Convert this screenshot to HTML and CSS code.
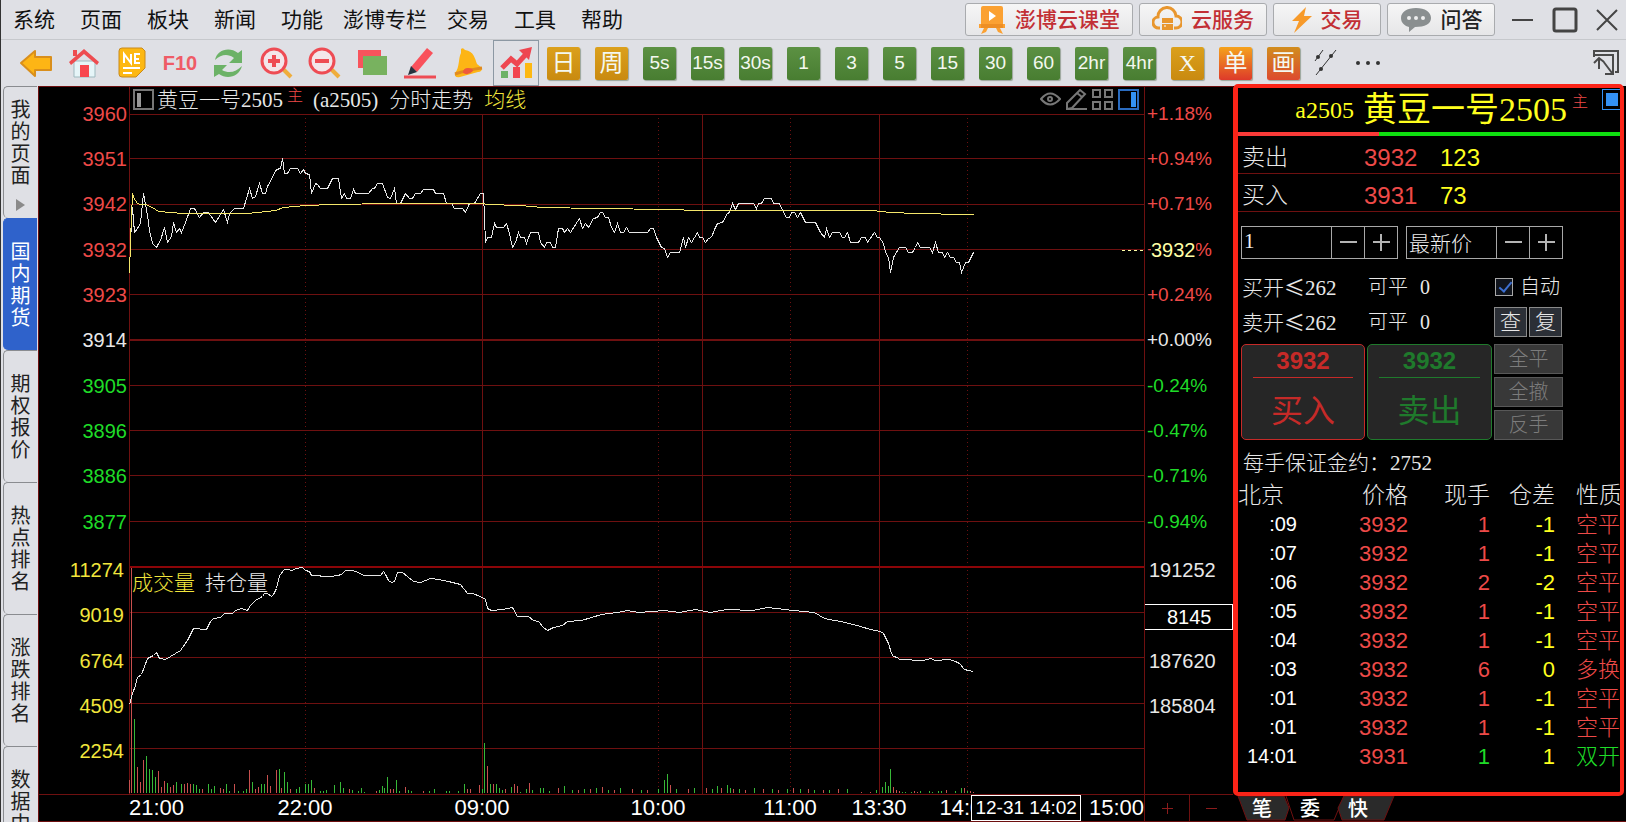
FILE: index.html
```
<!DOCTYPE html>
<html lang="zh-CN">

<head>
    <meta charset="UTF-8">
    <meta name="viewport" content="width=device-width, initial-scale=1.0">
    <title>分时走势</title>
    <link rel="stylesheet" href="styles.css">
</head>

<body>
    <!-- 菜单栏 -->
    <header class="menubar">
        <nav class="menu">
            <a href="#">系统</a>
            <a href="#">页面</a>
            <a href="#">板块</a>
            <a href="#">新闻</a>
            <a href="#">功能</a>
            <a href="#" class="long">澎博专栏</a>
            <a href="#">交易</a>
            <a href="#">工具</a>
            <a href="#">帮助</a>
        </nav>
        <div class="services">
            <button class="service w-course">
                <svg width="28" height="28" viewBox="0 0 28 28"><path d="M3 2q0-2 2-2h18q2 0 2 2v16h2v4h-5l3 6-5-2-2-4h-8l-2 4-5 2 3-6H1v-4h2z" fill="#fba132"/><path d="M3 18h22v4H3z" fill="#ee8f24"/><path d="M11 5l7 5-7 5z" fill="#fff"/></svg>
                澎博云课堂
            </button>
            <button class="service w-cloud">
                <svg width="30" height="28" viewBox="0 0 30 28" fill="none" stroke="#e8962e" stroke-width="3"><path d="M8 22H7a5 5 0 0 1-1-11 9 9 0 0 1 18-1 6 6 0 0 1 0 12h-2"/><path d="M10 12h11v5H10zM10 18h11v6H10z" fill="#e8962e" stroke="none"/><path d="M12 20h2" stroke="#fff" stroke-width="1"/></svg>
                云服务
            </button>
            <button class="service w-trade">
                <svg width="20" height="26" viewBox="0 0 20 26"><path d="M14 0L0 14h7L2 26 20 9h-8z" fill="#f79a2a"/></svg>
                交易
            </button>
            <button class="service w-ask dark">
                <svg width="32" height="26" viewBox="0 0 32 26"><path d="M16 1C7 1 1 5 1 11c0 5 4 8 8 9v5l6-5c10 0 16-3 16-9S25 1 16 1z" fill="#8a8f90"/><g fill="#eee"><circle cx="9" cy="11" r="2"/><circle cx="16" cy="11" r="2"/><circle cx="23" cy="11" r="2"/></g></svg>
                问答
            </button>
        </div>
        <div class="window-ctrl">
            <button aria-label="最小化"><svg width="26" height="28" viewBox="0 0 26 28"><path d="M2 14h21" class="win"/></svg></button>
            <button aria-label="最大化"><svg width="26" height="28" viewBox="0 0 26 28"><rect x="2" y="3" width="22" height="22" rx="2" class="win thick"/></svg></button>
            <button aria-label="关闭"><svg width="26" height="28" viewBox="0 0 26 28"><path d="M3 4l20 20M23 4L3 24" class="win"/></svg></button>
        </div>
    </header>

    <!-- 工具栏 -->
    <div class="toolbar">
        <button aria-label="后退"><svg width="34" height="34" viewBox="0 0 34 34"><path d="M2 17L16 5v6h16v13H16v6z" fill="#fdb515" stroke="#d98f1c" stroke-width="2" stroke-linejoin="round"/></svg></button>
        <button aria-label="首页"><svg width="34" height="34" viewBox="0 0 34 34"><path d="M7 15h21v16H7z" fill="#e6f5f8" stroke="#9fb9bf"/><path d="M6 4h4v6H6zM2 16L17 3l15 13-2 3L17 8 4 19z" fill="#ee4c50"/><path d="M13 19h9v12h-9z" fill="#f8474f"/></svg></button>
        <button aria-label="新闻"><svg width="34" height="34" viewBox="0 0 34 34"><path d="M4 5q0-3 3-3h20l3 3v17l-9 9H7q-3 0-3-3z" fill="#fdb812" stroke="#c98a1a"/><path d="M9 17V8l7 9V8M25 8h-5v9h5m-5-4h4M8 22h17M8 27h9" fill="none" stroke="#fff" stroke-width="2"/></svg></button>
        <button class="f10">F10</button>
        <button aria-label="刷新"><svg width="34" height="34" viewBox="0 0 34 34" fill="#6cb267"><path d="M4 14C6 4 18 0 27 7l4-3v13H18l5-5C16 7 10 9 4 14z"/><path d="M31 20C28 31 16 34 8 28l-5 3V19h13l-5 5c7 4 14 2 20-4z"/></svg></button>
        <button aria-label="放大"><svg width="34" height="34" viewBox="0 0 34 34"><path d="M24 23l8 8" stroke="#efad3c" stroke-width="4"/><circle cx="15" cy="15" r="12" fill="#f3e6ea" stroke="#ee4c54" stroke-width="3"/><path d="M15 9v12M9 15h12" stroke="#ee4c54" stroke-width="4"/></svg></button>
        <button aria-label="缩小"><svg width="34" height="34" viewBox="0 0 34 34"><path d="M24 23l8 8" stroke="#efad3c" stroke-width="4"/><circle cx="15" cy="15" r="12" fill="#f3e6ea" stroke="#ee4c54" stroke-width="3"/><path d="M8 15h14" stroke="#ee4c54" stroke-width="4"/></svg></button>
        <button aria-label="叠加"><svg width="34" height="34" viewBox="0 0 34 34"><path d="M3 4h23v18H3z" fill="#f8545c"/><path d="M8 10h24v19H8z" fill="#78b25f"/></svg></button>
        <button aria-label="画线"><svg width="34" height="34" viewBox="0 0 34 34"><path d="M24 2l6 5-16 19-6-5z" fill="#f9515b"/><path d="M8 20l6 6-9 3z" fill="#26333f"/><path d="M1 31h32" stroke="#ee4c54" stroke-width="3"/></svg></button>
        <button aria-label="预警"><svg width="34" height="34" viewBox="0 0 34 34"><path d="M10 3q2-2 4 1c9 1 10 9 12 14l5 4q0 4-4 4L9 31c-4 1-6-1-5-4 5-6 3-14 6-20z" fill="#fdb515"/><path d="M4 28q12-4 27-6" fill="none" stroke="#e08a20" stroke-width="3"/><path d="M12 27q0-5 5-5t5 3q-5 5-10 2z" fill="#ee5a3c"/></svg></button>
        <button class="selected" aria-label="分时"><svg width="34" height="34" viewBox="0 0 34 34"><path d="M3 22l9-9 6 5 11-12" fill="none" stroke="#ee4650" stroke-width="5"/><path d="M20 4l13-3-3 13z" fill="#ee4650"/><path d="M2 25h7v7H2z" fill="#6cb267"/><path d="M14 21h7v11h-7z" fill="#f2454f"/><path d="M26 17h7v15h-7z" fill="#fdb812"/></svg></button>
        <button class="period gold">日</button>
        <button class="period gold">周</button>
        <button class="period">5s</button>
        <button class="period">15s</button>
        <button class="period">30s</button>
        <button class="period">1</button>
        <button class="period">3</button>
        <button class="period">5</button>
        <button class="period">15</button>
        <button class="period">30</button>
        <button class="period">60</button>
        <button class="period">2hr</button>
        <button class="period">4hr</button>
        <button class="period gold serif">X</button>
        <button class="period fire">单</button>
        <button class="period fire dim">画</button>
        <button class="parallel" aria-label="画平行线"><svg width="24" height="30" viewBox="0 0 24 30" fill="#333" stroke="#333"><path d="M1 13L9 2M2 27L22 2"/><g stroke="none"><circle cx="4" cy="9" r="2"/><circle cx="7" cy="21" r="2"/><circle cx="17" cy="8" r="2"/></g></svg></button>
        <button aria-label="更多"><svg width="34" height="34" viewBox="0 0 34 34" fill="#333"><circle cx="7" cy="17" r="2"/><circle cx="17" cy="17" r="2"/><circle cx="27" cy="17" r="2"/></svg></button>
        <button class="restore" aria-label="还原"><svg width="28" height="28" viewBox="0 0 28 28" fill="none" stroke="#4a4a4a" stroke-width="2"><path d="M2 8V2h24v21h-3M2 6h19v13M7 20V10M2 14l5-5 5 4M11 12l9 12M13 25h8v-7"/></svg></button>
    </div>

    <main class="workspace">
        <!-- 左侧页签 -->
        <nav class="side-tabs">
            <button class="side-tab has-more"><span>我的页面</span><i class="arrow"></i></button>
            <button class="side-tab active"><span>国内期货</span></button>
            <button class="side-tab"><span>期权报价</span></button>
            <button class="side-tab"><span>热点排名</span></button>
            <button class="side-tab"><span>涨跌排名</span></button>
            <button class="side-tab"><span>数据中心</span></button>
        </nav>

        <!-- 分时图 -->
        <section class="chart">
            <div class="axis axis-left">
                <span class="up">3960</span>
                <span class="up">3951</span>
                <span class="up">3942</span>
                <span class="up">3932</span>
                <span class="up">3923</span>
                <span>3914</span>
                <span class="down">3905</span>
                <span class="down">3896</span>
                <span class="down">3886</span>
                <span class="down">3877</span>
                <span class="vol">11274</span>
                <span class="vol">9019</span>
                <span class="vol">6764</span>
                <span class="vol">4509</span>
                <span class="vol">2254</span>
            </div>

            <div class="chart-head">
                <svg width="21" height="21" viewBox="0 0 21 21"><rect x="1" y="1" width="19" height="19" fill="none" stroke="#777" stroke-width="2"/><path d="M4 4h4v14H4z" fill="#999"/></svg>
                <h1>黄豆一号2505</h1>
                <sup>主</sup>
                <span class="code">(a2505)</span>
                <span>分时走势</span>
                <span class="ma">均线</span>
                <div class="head-tools">
                    <button aria-label="显示"><svg width="21" height="21" viewBox="0 0 21 21" fill="none" stroke="#777" stroke-width="2"><path d="M1 10q9-11 19 0-10 11-19 0z"/><circle cx="10" cy="10" r="2"/></svg></button>
                    <button aria-label="画笔"><svg width="21" height="21" viewBox="0 0 21 21" fill="none" stroke="#777" stroke-width="2"><path d="M1 20v-6L14 1l5 4L6 19zM11 4l5 4M1 20h20"/></svg></button>
                    <button aria-label="多图"><svg width="21" height="21" viewBox="0 0 21 21" fill="none" stroke="#777" stroke-width="2"><path d="M1 1h7v7H1zM13 1h7v7h-7zM1 13h7v7H1zM13 13h7v7h-7z"/></svg></button>
                    <button aria-label="侧栏"><svg width="21" height="21" viewBox="0 0 21 21"><rect x="1" y="1" width="19" height="19" fill="none" stroke="#2a6cc0" stroke-width="2"/><path d="M13 3h5v15h-5z" fill="#3392f5"/></svg></button>
                </div>
            </div>

            <div class="plot">
                <svg class="plot-svg" viewBox="130 114 1014 680" preserveAspectRatio="none">
                    <path class="grid" d="M130 114.5h1014M130 158.5h1014M130 204.5h1014M130 249.5h1014M130 294.5h1014M130 385.5h1014M130 430.5h1014M130 475.5h1014M130 521.5h1014M130 612.5h1014M130 657.5h1014M130 703.5h1014M130 748.5h1014M482.5 114v680M702.5 114v680M879.5 114v680"/>
                    <path class="grid base" d="M130 340h1014"/>
                    <path class="grid split" d="M130 567h1014"/>
                    <path class="grid dots" d="M305.5 118v676M658.5 118v676M790.5 118v676M967.5 118v676"/>
                    <!-- 成交量 -->
                    <path class="bar-up" d="M129.5 793v-13M131.5 793V568M137.5 793v-26M140.5 793v-11M143.5 793v-33M158.5 793v-22M161.5 793v-6M164.5 793v-12M170.5 793v-6M173.5 793v-8M184.5 793v-9M187.5 793v-10M190.5 793v-9M202.5 793v-4M220.5 793v-5M223.5 793v-4M234.5 793v-9M249.5 793v-23M255.5 793v-4M258.5 793v-6M267.5 793v-18M270.5 793v-7M276.5 793v-23M281.5 793v-5M290.5 793v-4M314.5 793v-5M349.5 793v-4M376.5 793v-2M390.5 793v-4M393.5 793v-4M405.5 793v-6M423.5 793v-2M467.5 793v-4M470.5 793v-4M479.5 793v-8M487.5 793v-27M493.5 793v-9M505.5 793v-4M514.5 793v-9M517.5 793v-7M529.5 793v-10M558.5 793v-5M578.5 793v-3M590.5 793v-4M602.5 793v-6M614.5 793v-3M632.5 793v-4M647.5 793v-3M670.5 793v-8M688.5 793v-4M706.5 793v-5M721.5 793v-5M733.5 793v-4M745.5 793v-3M763.5 793v-4M778.5 793v-3M793.5 793v-5M808.5 793v-4M823.5 793v-3M838.5 793v-4M861.5 793v-1M870.5 793v-1M893.5 793v-6M896.5 793v-3M899.5 793v-2M914.5 793v-2M917.5 793v-1M946.5 793v-3M964.5 793v-5M970.5 793v-2M973.5 793v-1"/>
                    <path class="bar-down" d="M134.5 793v-74M146.5 793v-37M149.5 793v-24M152.5 793v-23M155.5 793v-16M167.5 793v-10M176.5 793v-11M181.5 793v-9M193.5 793v-9M196.5 793v-8M199.5 793v-4M208.5 793v-9M211.5 793v-4M214.5 793v-7M226.5 793v-9M229.5 793v-2M238.5 793v-2M243.5 793v-2M246.5 793v-4M252.5 793v-11M261.5 793v-9M264.5 793v-9M279.5 793v-24M284.5 793v-21M287.5 793v-11M296.5 793v-4M299.5 793v-6M305.5 793v-9M308.5 793v-9M311.5 793v-13M320.5 793v-2M323.5 793v-2M326.5 793v-3M334.5 793v-8M340.5 793v-11M343.5 793v-5M352.5 793v-3M358.5 793v-2M361.5 793v-5M364.5 793v-1M379.5 793v-3M382.5 793v-7M384.5 793v-5M387.5 793v-16M396.5 793v-13M399.5 793v-2M408.5 793v-3M411.5 793v-2M429.5 793v-2M434.5 793v-4M446.5 793v-2M449.5 793v-2M458.5 793v-2M464.5 793v-9M482.5 793v-4M484.5 793v-50M490.5 793v-9M496.5 793v-9M499.5 793v-5M502.5 793v-3M511.5 793v-6M520.5 793v-1M526.5 793v-4M532.5 793v-3M540.5 793v-5M543.5 793v-5M549.5 793v-2M564.5 793v-7M572.5 793v-3M584.5 793v-4M596.5 793v-5M608.5 793v-3M620.5 793v-5M641.5 793v-3M658.5 793v-4M664.5 793v-13M667.5 793v-19M676.5 793v-4M694.5 793v-5M712.5 793v-4M717.5 793v-7M727.5 793v-8M730.5 793v-5M739.5 793v-4M754.5 793v-5M772.5 793v-4M787.5 793v-4M800.5 793v-4M814.5 793v-3M829.5 793v-3M847.5 793v-4M876.5 793v-3M882.5 793v-6M885.5 793v-11M888.5 793v-7M890.5 793v-24M902.5 793v-1M905.5 793v-1M911.5 793v-1M920.5 793v-2M929.5 793v-2M932.5 793v-1M938.5 793v-2M941.5 793v-2M955.5 793v-2M961.5 793v-5M967.5 793v-2"/>
                    <!-- 折线，对齐到像素中心 -->
                    <g transform="translate(0.5 0.5)">
                        <!-- 价格 -->
                        <polyline class="line price" points="129,273 130,240 132,207 134,232 137,228 140,223 141,212 143,193 147,215 149,230 152,243 156,247 158,243 160,240 164,227 167,242 171,236 173,222 176,232 179,228 181,232 185,222 190,208 194,208 199,217 203,212 208,212 215,222 223,209 227,222 229,213 234,208 243,208 249,188 252,198 255,196 259,183 262,193 265,193 267,186 276,169 280,168 282,158 284,173 287,173 290,168 297,168 300,173 303,169 305,173 309,174 311,193 315,183 317,184 320,188 327,188 332,178 338,178 341,198 344,193 346,198 350,198 353,189 355,193 368,193 372,188 374,188 377,183 382,183 387,197 390,198 394,188 396,203 400,203 405,193 409,198 412,198 415,193 420,193 423,189 433,189 435,193 443,193 446,203 451,203 454,208 462,208 465,212 469,203 474,203 480,193 483,193 485,242 487,237 491,237 494,223 496,227 503,227 506,223 509,233 512,247 515,242 518,232 520,237 524,237 526,243 530,232 538,232 540,242 544,247 546,242 550,242 552,247 555,247 558,228 562,228 564,232 567,228 570,232 579,218 582,228 585,223 588,227 593,218 597,217 600,212 602,212 605,217 608,217 611,227 614,232 617,223 620,232 623,232 626,227 629,232 647,232 650,228 653,228 656,237 661,247 664,248 667,257 670,252 679,252 683,237 685,247 688,237 691,242 697,232 699,237 702,237 705,242 708,238 711,237 714,229 717,223 722,222 727,213 729,212 732,203 735,209 738,203 753,203 756,208 758,203 761,203 764,198 771,198 773,203 779,203 783,212 786,217 789,217 791,212 794,212 797,217 800,212 805,222 815,222 820,232 824,237 826,228 829,237 832,232 839,232 842,237 844,237 847,232 850,242 858,242 861,237 865,237 867,242 874,232 877,237 879,237 883,243 885,252 888,257 890,272 893,257 896,252 899,247 905,247 908,252 912,252 915,247 917,242 920,247 929,247 932,252 935,242 938,252 942,252 944,257 947,252 950,257 953,257 956,262 959,262 961,272 965,262 968,262 973,252"/>
                        <!-- 均线 -->
                        <polyline class="line avg" points="129,273 130,240 132,193 133,197 137,203 140,204 145,204 152,207 158,211 170,212 183,213 247,213 257,212 275,210 283,207 305,205 333,204 390,203 483,203 486,204 520,205 542,207 597,208 667,209 700,210 872,210 890,212 917,213 963,214 973,214"/>
                        <!-- 持仓量 -->
                        <polyline class="line price" points="129,704 132,693 135,685 137,677 141,674 147,658 153,655 156,652 159,658 165,659 170,656 180,650 187,640 193,628 206,629 210,621 213,618 220,617 224,613 232,613 235,610 241,608 247,610 250,605 255,600 262,596 264,593 267,593 271,596 273,594 276,588 279,575 284,569 288,569 291,570 296,568 302,567 305,570 309,571 311,575 317,575 323,576 328,576 332,576 335,575 337,575 341,574 345,570 352,570 358,572 363,575 380,575 383,571 385,574 388,580 391,582 394,581 397,572 402,572 407,576 413,581 420,582 430,578 438,579 448,581 460,584 467,593 472,593 480,596 485,599 487,608 491,610 502,609 512,607 517,616 528,616 533,620 538,621 543,627 547,630 553,627 562,625 567,621 581,620 601,614 617,612 627,610 638,612 664,610 679,612 695,609 710,612 726,609 752,610 767,607 793,610 814,612 824,618 845,622 860,626 870,629 880,631 883,633 888,643 891,653 893,656 897,657 899,659 923,660 930,658 935,660 949,659 955,661 959,663 964,669 968,670 973,671"/>
                    </g>
                    <path class="last-line" d="M1122 250.5h22"/>
                </svg>
                <div class="legend"><span class="ma">成交量</span><span>持仓量</span></div>
            </div>

            <div class="axis axis-right">
                <span class="up">+1.18%</span>
                <span class="up">+0.94%</span>
                <span class="up">+0.71%</span>
                <span class="up last">+0.47%<b>3932</b></span>
                <span class="up">+0.24%</span>
                <span>+0.00%</span>
                <span class="down">-0.24%</span>
                <span class="down">-0.47%</span>
                <span class="down">-0.71%</span>
                <span class="down">-0.94%</span>
                <span class="oi">191252</span>
                <span class="cursor-value"><b>8145</b></span>
                <span class="oi">187620</span>
                <span class="oi">185804</span>
                <span></span>
            </div>

            <div class="time-row">
                <div class="times">
                    <span class="first">21:00</span>
                    <span>22:00</span>
                    <span>09:00</span>
                    <span>10:00</span>
                    <span>11:00</span>
                    <span>13:30</span>
                    <span class="covered">14:00</span>
                    <span class="final">15:00</span>
                    <b class="cursor-time">12-31 14:02</b>
                </div>
                <button class="scale" aria-label="放大时间轴"><svg width="11" height="11"><path d="M5.5 0v11M0 5.5h11"/></svg></button>
                <button class="scale" aria-label="缩小时间轴"><svg width="11" height="11"><path d="M0 5.5h11"/></svg></button>
            </div>
        </section>

        <!-- 右侧盘口 -->
        <aside class="side">
            <div class="panel">
                <div class="quote-title">
                    <span class="code">a2505</span>
                    <h2>黄豆一号2505</h2>
                    <sup>主</sup>
                    <button class="dock" aria-label="停靠"></button>
                </div>
                <div class="ratio"><i></i></div>
                <div class="depth"><span>卖出</span><b class="up">3932</b><b class="qty">123</b></div>
                <div class="depth"><span>买入</span><b class="up">3931</b><b class="qty">73</b></div>

                <form class="order">
                    <div class="steppers">
                        <div class="stepper">
                            <input type="text" value="1" aria-label="手数">
                            <button type="button" aria-label="减少手数"><svg width="17" height="17"><path d="M0 8h17"/></svg></button>
                            <button type="button" aria-label="增加手数"><svg width="17" height="17"><path d="M0 8h17M8 0v17"/></svg></button>
                        </div>
                        <div class="stepper">
                            <input type="text" value="最新价" aria-label="价格">
                            <button type="button" aria-label="降低价格"><svg width="17" height="17"><path d="M0 8h17"/></svg></button>
                            <button type="button" aria-label="提高价格"><svg width="17" height="17"><path d="M0 8h17M8 0v17"/></svg></button>
                        </div>
                    </div>
                    <div class="limits">
                        <span>买开<i>≤</i>262</span>
                        <span>可平<em>0</em></span>
                        <label for="auto"><input type="checkbox" id="auto" checked>自动</label>
                    </div>
                    <div class="limits">
                        <span>卖开<i>≤</i>262</span>
                        <span>可平<em>0</em></span>
                        <div class="mini"><button type="button">查</button><button type="button">复</button></div>
                    </div>
                    <div class="actions">
                        <button type="button" class="deal buy"><b>3932</b><span>买入</span></button>
                        <button type="button" class="deal sell"><b>3932</b><span>卖出</span></button>
                        <div class="extra">
                            <button type="button" disabled>全平</button>
                            <button type="button" disabled>全撤</button>
                            <button type="button" disabled>反手</button>
                        </div>
                    </div>
                    <p class="margin">每手保证金约：2752</p>
                </form>

                <table class="ticks">
                    <colgroup><col class="c-time"><col class="c-price"><col class="c-qty"><col class="c-diff"><col></colgroup>
                    <thead>
                        <tr><th>北京</th><th>价格</th><th>现手</th><th>仓差</th><th>性质</th></tr>
                    </thead>
                    <tbody>
                        <tr><td>:09</td><td>3932</td><td>1</td><td>-1</td><td>空平</td></tr>
                        <tr><td>:07</td><td>3932</td><td>1</td><td>-1</td><td>空平</td></tr>
                        <tr><td>:06</td><td>3932</td><td>2</td><td>-2</td><td>空平</td></tr>
                        <tr><td>:05</td><td>3932</td><td>1</td><td>-1</td><td>空平</td></tr>
                        <tr><td>:04</td><td>3932</td><td>1</td><td>-1</td><td>空平</td></tr>
                        <tr><td>:03</td><td>3932</td><td>6</td><td>0</td><td>多换</td></tr>
                        <tr><td>:01</td><td>3932</td><td>1</td><td>-1</td><td>空平</td></tr>
                        <tr><td>:01</td><td>3932</td><td>1</td><td>-1</td><td>空平</td></tr>
                        <tr class="open"><td>14:01</td><td>3931</td><td>1</td><td>1</td><td>双开</td></tr>
                    </tbody>
                </table>
            </div>
            <div class="bottom-tabs">
                <svg class="tab-shapes" width="160" height="25" viewBox="0 0 160 25"><path class="dark" d="M2 0h46l5 12-4 12H11z"/><path d="M50 0l8 24h40l10-24"/><path class="dark" d="M108 0h50l-10 24h-42l-4-12z"/></svg>
                <button>笔</button>
                <button>委</button>
                <button>快</button>
            </div>
        </aside>
    </main>
</body>

</html>
```
FILE: styles.css
```
* {
    padding: 0;
    margin: 0;
    box-sizing: border-box;
}

body {
    height: 100vh;
    display: flex;
    flex-direction: column;
    overflow: hidden;
    border-left: 1px solid #333;
    background: #dfe0e5;
    color: #e8e8e8;
    font-family: "Liberation Sans", "Noto Sans CJK SC", sans-serif;
    font-size: 20px;
}

button {
    border: 0;
    background: none;
    color: inherit;
    font: inherit;
}

svg {
    display: block;
}

b,
i,
em,
h1,
h2,
th {
    font-weight: normal;
    font-style: normal;
}

.up {
    color: #ee4a48;
}

.down {
    color: #1fdc28;
}

/* 菜单栏 */
.menubar {
    height: 40px;
    flex: none;
    display: flex;
    align-items: center;
    padding: 0 6px 0 12px;
    border-bottom: 1px solid #c6c8cc;
}

.menu {
    display: flex;
    gap: 25px;
    margin-right: auto;
}

.menu a {
    color: #111;
    font-size: 21px;
    line-height: 34px;
    text-decoration: none;
    white-space: nowrap;
}

.menu .long {
    margin: 0 -5px;
}

.services {
    display: flex;
    gap: 6px;
}

.service {
    height: 33px;
    display: flex;
    align-items: center;
    justify-content: center;
    gap: 9px;
    border: 1px solid #a9abae;
    border-radius: 3px;
    background: linear-gradient(#f6f6f6, #e6e6e8);
    color: #c22f35;
    font-size: 21px;
    font-weight: 500;
    line-height: 28px;
    white-space: nowrap;
}

.service.dark {
    color: #222;
}

.w-course {
    width: 168px;
}

.w-cloud {
    width: 128px;
}

.w-trade,
.w-ask {
    width: 108px;
}

.window-ctrl {
    display: flex;
    gap: 16px;
    margin-left: 15px;
}

.win {
    fill: none;
    stroke: #444;
    stroke-width: 2;
}

.win.thick {
    stroke-width: 3;
}

/* 工具栏 */
.toolbar {
    height: 46px;
    flex: none;
    display: flex;
    align-items: center;
    padding: 0 6px 0 11px;
}

.toolbar button {
    width: 48px;
    height: 46px;
    flex: none;
    display: flex;
    align-items: center;
    justify-content: center;
}

.toolbar .f10 {
    color: #ef5b66;
    font-size: 20px;
    font-weight: bold;
}

.toolbar .selected {
    width: 46px;
    margin: 0 1px;
    border: 1px solid #8c98a3;
}

.toolbar .period {
    width: 33px;
    height: 33px;
    margin: 0 8px 0 7px;
    border-radius: 2px;
    background: linear-gradient(#5c9143, #487d31);
    box-shadow: 1px 1px 1px #9aa59a;
    color: #f4f8f0;
    font-size: 19px;
    line-height: 30px;
}

.toolbar .gold {
    background: linear-gradient(#dba01c, #c98a10);
    font-size: 24px;
}

.toolbar .serif {
    font-family: "Liberation Serif", serif;
}

.toolbar .fire {
    background: linear-gradient(#f5a21c, #dd3a2a);
    font-size: 24px;
}

.toolbar .dim {
    background: linear-gradient(#d18d1e, #dd4a2e);
}

.toolbar .parallel {
    width: 36px;
}

.toolbar .restore {
    width: 28px;
    margin-left: auto;
}

/* 主体 */
.workspace {
    flex: 1;
    min-height: 0;
    display: flex;
}

.side-tabs {
    width: 37px;
    flex: none;
    padding-left: 2px;
    overflow: hidden;
    color: #222;
}

.side-tab {
    width: 34px;
    height: 132px;
    display: flex;
    flex-direction: column;
    align-items: center;
    justify-content: center;
    border: 1px solid #8a8c90;
    border-width: 1px 0 0 1px;
    border-radius: 5px 0 0 5px;
}

.side-tab span {
    width: 20px;
    line-height: 22px;
    word-break: break-all;
}

.side-tab.active {
    border-color: #2f62cb;
    background: #2f62cb;
    color: #fff;
}

.has-more {
    justify-content: flex-start;
    padding-top: 12px;
}

.arrow {
    margin-top: 12px;
    border: 6px solid transparent;
    border-left: 9px solid #8a8a8a;
    border-right: 0;
}

/* 分时图 */
.chart {
    flex: 1;
    min-width: 0;
    display: grid;
    grid-template-columns: 90px 1fr 88px;
    grid-template-rows: 27px 1fr 27px;
    border: 1px solid #6e1010;
    border-right: 0;
    background: #000;
}

.axis {
    grid-row: 1 / 3;
    display: grid;
    grid-template-rows: repeat(15, 1fr);
    padding: 4px 2px 23px;
    line-height: 24px;
}

.axis span {
    display: flex;
    align-items: center;
}

.axis-left span {
    justify-content: flex-end;
}

.axis-left .vol {
    padding: 6px 3px 0 0;
    color: #f2e63c;
}

.axis-right {
    grid-column: 3;
    grid-row: 1 / 3;
    font-size: 19px;
}

.axis-right .oi {
    padding: 6px 0 0 2px;
    font-size: 20px;
}

.axis-right .last {
    position: relative;
}

.last b {
    position: absolute;
    left: 4px;
    background: #000;
    color: #ffffa6;
    font-size: 20px;
}

.axis-right .cursor-value {
    margin: 0 -2px 0 -3px;
    padding-top: 10px;
    font-size: 20px;
}

.cursor-value b {
    flex: 1;
    padding-left: 22px;
    border: 1px solid #fff;
    background: #000;
    color: #fff;
}

.chart-head {
    grid-column: 2;
    grid-row: 1;
    display: flex;
    align-items: center;
    padding: 0 5px 2px 3px;
    border: 1px solid #6e1010;
    border-width: 0 1px;
    font-family: "Liberation Serif", "Noto Sans CJK SC", serif;
    font-size: 21px;
    font-weight: 300;
    line-height: 24px;
    white-space: nowrap;
}

.chart-head h1 {
    margin-left: 3px;
    font-size: 21px;
    font-weight: 300;
}

sup {
    color: #ee4a48;
    font-size: 16px;
    line-height: 16px;
}

.chart-head sup {
    margin: 0 10px 8px 4px;
}

.chart-head .code {
    margin-right: 11px;
}

.ma {
    color: #f2e63c;
}

.chart-head .ma {
    margin-left: 11px;
}

.head-tools {
    display: flex;
    gap: 5px;
    margin-left: auto;
}

.plot {
    grid-column: 2;
    grid-row: 2;
    position: relative;
    min-height: 0;
    border: 1px solid #6e1010;
    border-width: 0 1px;
}

.plot-svg {
    position: absolute;
    width: 100%;
    height: 100%;
    overflow: visible;
    shape-rendering: crispEdges;
}

.plot-svg * {
    fill: none;
    stroke-width: 1;
    vector-effect: non-scaling-stroke;
}

.plot-svg .grid {
    stroke: #6e1010;
}

.plot-svg .base {
    stroke-width: 2;
}

.plot-svg .split {
    stroke: #8c0508;
    stroke-width: 2;
}

.plot-svg .dots {
    stroke-dasharray: 1 3;
}

.line.price {
    stroke: #e6e6e6;
}

.line.avg {
    stroke: #f4e66a;
}

.bar-up {
    stroke: #c8504e;
}

.bar-down {
    stroke: #37b837;
}

.last-line {
    stroke: #ffffa6;
    stroke-dasharray: 3 3;
}

.legend {
    position: absolute;
    top: 67%;
    left: 2px;
    display: flex;
    gap: 10px;
    font-size: 21px;
    font-weight: 300;
    line-height: 26px;
}

.time-row {
    grid-column: 1 / 4;
    display: flex;
    border-top: 1px solid #6e1010;
    color: #fff;
}

.times {
    flex: 1;
    position: relative;
    display: grid;
    grid-template-columns: 176fr 177fr 176fr 132fr 89fr 88fr 177fr;
    margin-left: 90px;
    font-size: 22px;
    line-height: 25px;
}

.times span {
    grid-row: 1;
    width: 0;
    display: flex;
    justify-content: center;
    white-space: nowrap;
}

.times .first {
    width: auto;
    justify-content: flex-start;
}

.times .covered {
    grid-column: 7;
}

.times .final {
    grid-column: 7;
    width: auto;
    justify-content: flex-end;
}

.cursor-time {
    position: absolute;
    top: 0;
    left: 83%;
    padding: 0 3px;
    border: 1px solid #fff;
    background: #000;
    font-size: 19px;
    line-height: 24px;
}

.scale {
    width: 45px;
    display: flex;
    align-items: center;
    justify-content: center;
    border-left: 1px solid #6e1010;
}

.scale:last-child {
    width: 44px;
}

.scale path {
    stroke: #8c1c1c;
}

/* 盘口 */
.side {
    width: 393px;
    flex: none;
    display: flex;
    flex-direction: column;
    padding-right: 2px;
    border-bottom: 1px solid #6e1010;
    background: #000;
}

.panel {
    flex: 1;
    min-height: 0;
    margin-top: -2px;
    overflow: hidden;
    border: 4px solid #fb2418;
    border-left-width: 5px;
    border-radius: 5px;
    background: #000;
    font-weight: 300;
}

.quote-title {
    position: relative;
    height: 44px;
    display: flex;
    align-items: center;
    justify-content: flex-end;
    padding-right: 32px;
    color: #ffff1e;
    font-family: "Liberation Serif", "Noto Sans CJK SC", serif;
    font-size: 24px;
    line-height: 40px;
    white-space: nowrap;
}

.quote-title h2 {
    margin: 0 5px 0 9px;
    font-size: 34px;
}

.quote-title sup {
    margin-bottom: 16px;
}

.dock {
    position: absolute;
    top: 1px;
    right: -2px;
    width: 20px;
    height: 21px;
    border: 1px solid #3392f5;
    background: #3392f5;
    box-shadow: inset 0 0 0 3px #000;
}

.ratio {
    height: 4px;
    background: #0fe010;
}

.ratio i {
    display: block;
    width: 37%;
    height: 4px;
    background: #fb3a38;
}

.depth {
    height: 38px;
    display: grid;
    grid-template-columns: 122px 76px 1fr;
    align-items: center;
    padding: 6px 0 0 4px;
    border-bottom: 1px solid #6e1010;
    font-size: 24px;
    line-height: 31px;
}

.depth span {
    font-size: 23px;
}

.qty {
    color: #ffff1e;
}

.order {
    width: 325px;
    padding: 14px 0 0 3px;
    font-family: "Liberation Serif", "Noto Sans CJK SC", serif;
}

.steppers {
    display: flex;
    gap: 8px;
}

.stepper {
    flex: 1;
    min-width: 0;
    height: 33px;
    display: flex;
    border: 1px solid #a8a8a8;
}

.stepper input {
    flex: 1;
    min-width: 0;
    padding: 0 0 2px 2px;
    border: 0;
    background: none;
    color: #eee;
    font: inherit;
    font-size: 21px;
    outline: 0;
}

.stepper button {
    width: 33px;
    flex: none;
    display: flex;
    align-items: center;
    justify-content: center;
    border-left: 1px solid #a8a8a8;
}

.stepper path {
    stroke: #b4b4b4;
    stroke-width: 2;
}

.limits {
    height: 35px;
    display: grid;
    grid-template-columns: 126px 126px 1fr;
    align-items: center;
    padding-left: 1px;
    font-size: 21px;
    line-height: 30px;
}

.steppers + .limits {
    margin-top: 10px;
}

.limits i {
    font-family: "Noto Sans CJK SC", sans-serif;
}

.limits em {
    margin-left: 12px;
}

.limits > span:nth-child(2) {
    font-size: 20px;
}

.limits label {
    display: flex;
    align-items: center;
    gap: 7px;
    padding-left: 1px;
    font-size: 20px;
}

.limits input {
    appearance: none;
    width: 18px;
    height: 18px;
    border: 1px solid #a8a8a8;
    background: #10141c;
}

.limits input:checked::after {
    content: "";
    display: block;
    width: 5px;
    height: 11px;
    margin: 0 0 0 6px;
    border: solid #3d6fd0;
    border-width: 0 2px 2px 0;
    transform: rotate(40deg);
}

.mini {
    display: flex;
    gap: 2px;
}

.mini button {
    width: 33px;
    height: 30px;
    border: 1px solid #8a8a8a;
    background: #2b2f36;
    line-height: 26px;
}

.actions {
    display: grid;
    grid-template-columns: 124px 125px 69px;
    gap: 2px;
    margin-top: 5px;
}

.deal {
    height: 96px;
    padding: 2px 11px;
    border: 1px solid;
    border-radius: 5px;
    background: #262626;
}

.buy {
    color: #c62a28;
}

.sell {
    color: #1f7a2c;
}

.deal b {
    display: block;
    padding-bottom: 2px;
    border-bottom: 1px solid;
    font-family: "Liberation Sans", sans-serif;
    font-size: 24px;
    font-weight: bold;
    line-height: 28px;
}

.deal span {
    display: block;
    font-size: 32px;
    font-weight: 400;
    line-height: 66px;
}

.extra {
    display: grid;
    gap: 3px;
}

.extra button {
    height: 30px;
    border: 1px solid #585858;
    background: #383838;
    color: #7c7c7c;
    font-size: 20px;
    line-height: 26px;
}

.margin {
    margin-top: 8px;
    padding-left: 2px;
    font-size: 21px;
    line-height: 30px;
    white-space: nowrap;
}

/* 逐笔成交 */
.ticks {
    width: 100%;
    table-layout: fixed;
    border-collapse: collapse;
    margin-top: 3px;
    font-size: 22px;
    line-height: 29px;
}

.c-time {
    width: 59px;
}

.c-price {
    width: 111px;
}

.c-qty {
    width: 82px;
}

.c-diff {
    width: 65px;
}

.ticks th,
.ticks td {
    overflow: hidden;
    color: #ee4a48;
    text-align: right;
    white-space: nowrap;
}

.ticks th {
    color: #e8e8e8;
    font-size: 23px;
    font-weight: 300;
}

.ticks th:first-child {
    text-align: left;
}

.ticks td:first-child {
    color: #fff;
    font-size: 20px;
}

.ticks td:nth-child(4) {
    color: #ffff1e;
}

.ticks th:last-child,
.ticks td:last-child {
    padding-left: 21px;
    text-align: left;
    text-overflow: clip;
}

.ticks .open td:nth-child(3),
.ticks .open td:last-child {
    color: #1fdc28;
}

/* 底部页签 */
.bottom-tabs {
    position: relative;
    height: 25px;
    flex: none;
    display: flex;
    padding-left: 5px;
    color: #fff;
}

.bottom-tabs button {
    position: relative;
    width: 48px;
    font-weight: 500;
    line-height: 24px;
}

.tab-shapes {
    position: absolute;
    top: 0;
    left: 3px;
    fill: #000;
    stroke: #6e1010;
}

.tab-shapes .dark {
    fill: #2a2a2a;
}
```
